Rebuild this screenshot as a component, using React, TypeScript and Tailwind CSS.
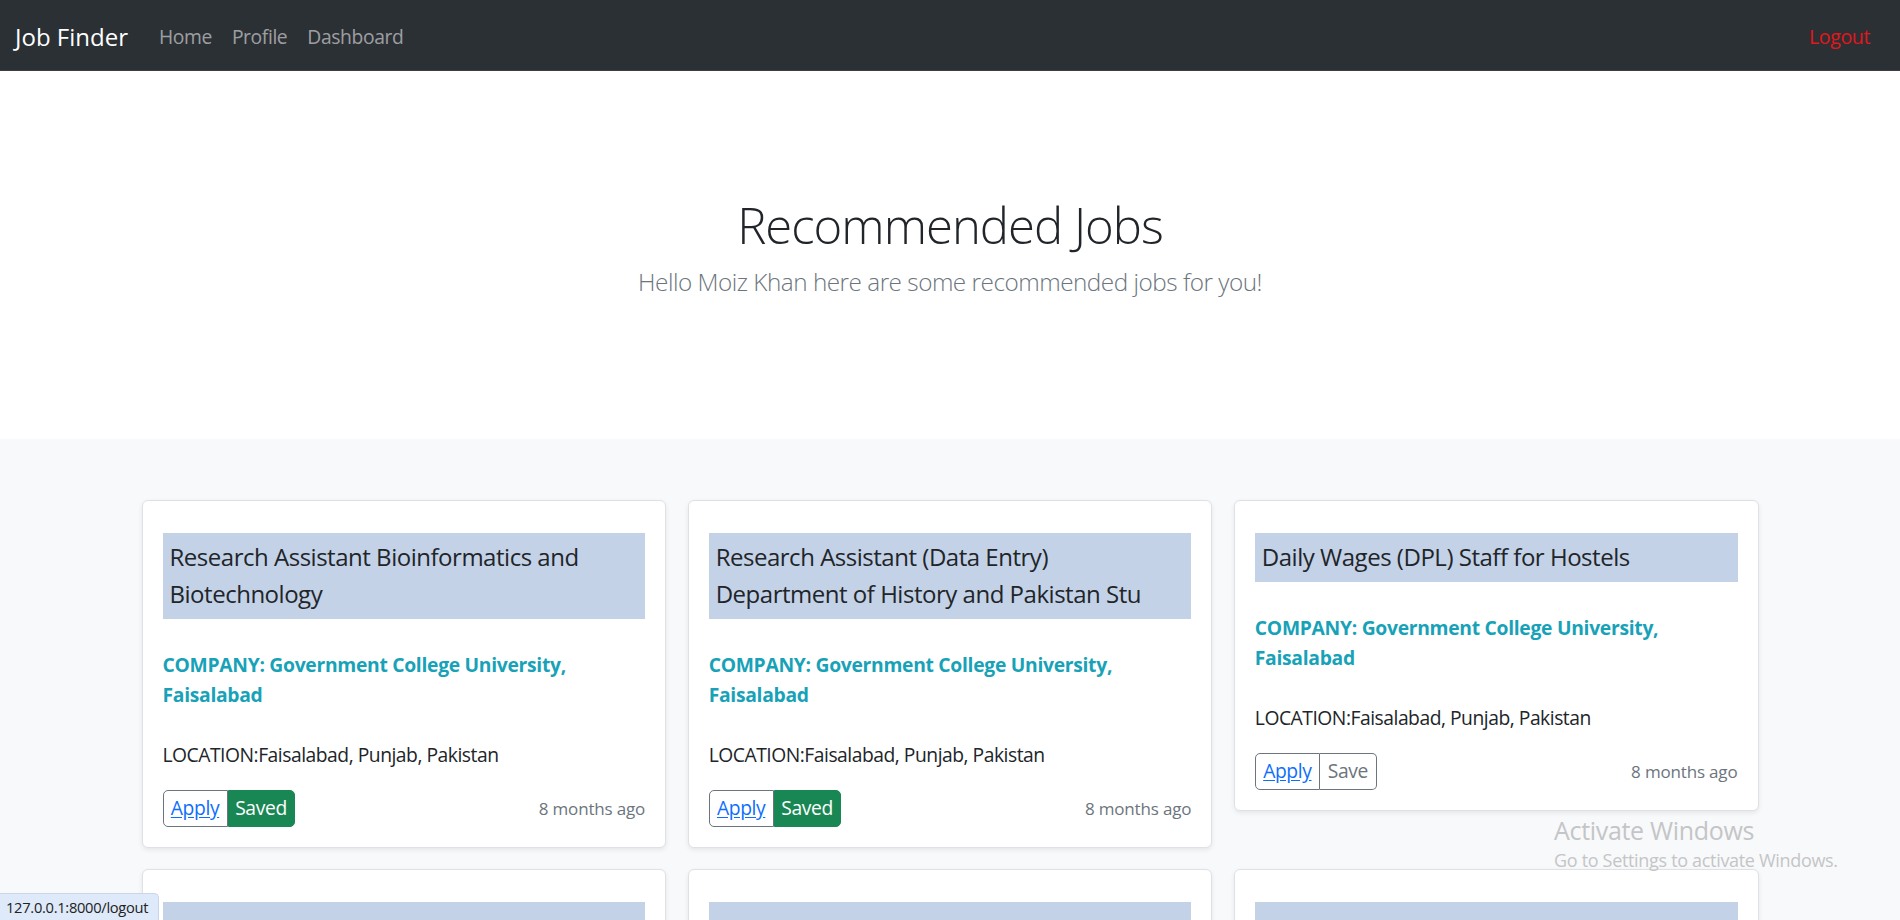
import React from "react";

type Job = {
  title: string;
  saved: boolean;
  partial?: boolean;
};

const jobs: Job[] = [
  { title: "Research Assistant Bioinformatics and Biotechnology", saved: true },
  { title: "Research Assistant (Data Entry) Department of History and Pakistan Stu", saved: true },
  { title: "Daily Wages (DPL) Staff for Hostels", saved: false },
  { title: "\u00a0", saved: false, partial: true },
  { title: "\u00a0", saved: false, partial: true },
  { title: "\u00a0", saved: false, partial: true },
];

function JobCard({ job }: { job: Job }) {
  return (
    <div className="bg-white border border-[#dee2e6] rounded-[6px] shadow-[0_2px_5px_rgba(0,0,0,0.08)] px-[20px] pt-[31.5px] pb-[20px]">
      <h5 className="bg-[#c4d2e7] px-[7px] py-[6.5px] text-[24px] leading-[36.7px] font-normal tracking-[-0.02em] text-[#212529]">
        {job.title}
      </h5>
      {job.partial ? (
        <div className="h-[220px]" />
      ) : (
        <>
          <p className="mt-[31px] text-[19.3px] leading-[30px] font-bold tracking-[-0.015em] text-[#17a2b8]">
            COMPANY: Government College University, Faisalabad
          </p>
          <p className="mt-[30px] text-[19.3px] leading-[30px] tracking-[-0.025em] text-[#212529]">
            LOCATION:Faisalabad, Punjab, Pakistan
          </p>
          <div className="mt-[20px] flex items-center justify-between">
            <div className="flex">
              <a
                href="#"
                className="h-[36.7px] w-[65px] flex items-center justify-center border border-[#6c757d] rounded-l-[5px] text-[19.3px] tracking-[-0.02em] text-[#0d6efd] underline underline-offset-2 bg-white"
              >
                Apply
              </a>
              {job.saved ? (
                <button className="h-[36.7px] w-[67px] flex items-center justify-center bg-[#198754] border border-[#198754] rounded-r-[5px] text-[19.3px] tracking-[-0.02em] text-white">
                  Saved
                </button>
              ) : (
                <button className="h-[36.7px] w-[57px] flex items-center justify-center border border-l-0 border-[#6c757d] rounded-r-[5px] text-[19.3px] tracking-[-0.02em] text-[#6c757d] bg-white">
                  Save
                </button>
              )}
            </div>
            <span className="text-[17px] tracking-[-0.01em] text-[#6c757d]">8 months ago</span>
          </div>
        </>
      )}
    </div>
  );
}

export default function App() {
  return (
    <div className="relative h-[920px] overflow-hidden bg-[#f8f9fa] font-['Open_Sans',sans-serif]">
      <nav className="h-[71px] bg-[#2b3035] border-b border-[#3a3f44] flex items-center pl-[15px] pr-[20px] pt-[4px]">
        <a href="#" className="text-[24px] text-white mr-[21px]">
          Job Finder
        </a>
        <a href="#" className="px-[10px] text-[19.3px] tracking-[-0.02em] text-[rgba(255,255,255,0.55)]">
          Home
        </a>
        <a href="#" className="px-[10px] text-[19.3px] tracking-[-0.02em] text-[rgba(255,255,255,0.55)]">
          Profile
        </a>
        <a href="#" className="px-[10px] text-[19.3px] tracking-[-0.02em] text-[rgba(255,255,255,0.55)]">
          Dashboard
        </a>
        <a href="#" className="ml-auto px-[10px] text-[19.6px] tracking-[-0.02em] text-[#e3161b]">
          Logout
        </a>
      </nav>

      <section className="bg-white h-[368px] flex flex-col items-center pt-[124px]">
        <h1 className="text-[49px] font-light leading-[60px] tracking-[-0.02em] text-[#212529] mb-[8px]">
          Recommended Jobs
        </h1>
        <p className="text-[24.3px] font-light leading-[37.5px] tracking-[-0.02em] text-[#6c757d]">
          Hello Moiz Khan here are some recommended jobs for you!
        </p>
      </section>

      <section className="pt-[61px]">
        <div className="w-[1617px] mx-auto grid grid-cols-3 gap-x-[21.5px] gap-y-[21.5px] items-start">
          {jobs.map((job, i) => (
            <JobCard key={i} job={job} />
          ))}
        </div>
      </section>

      <div className="absolute left-[1554px] top-[813px] pointer-events-none tracking-[-0.02em] text-[#c4c5c7]">
        <div className="text-[25px] leading-[34px]">Activate Windows</div>
        <div className="text-[18px] leading-[26px]">Go to Settings to activate Windows.</div>
      </div>

      <div className="absolute left-0 bottom-0 h-[27px] w-[159px] bg-[#dee9f9] border-t border-r border-[#c9d6ea] rounded-tr-[5px] flex items-center pl-[6px] text-[14.7px] tracking-[-0.02em] text-[#222]">
        127.0.0.1:8000/logout
      </div>
    </div>
  );
}
